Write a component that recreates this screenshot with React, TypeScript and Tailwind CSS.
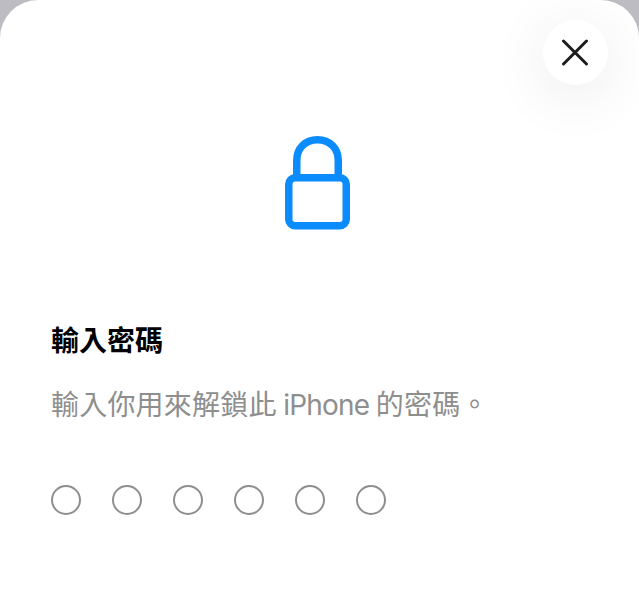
const font = { fontFamily: '"Inter", "Noto Sans CJK TC", sans-serif' };

function LockIcon() {
  return (
    <svg width="66" height="94" viewBox="0 0 66 94" fill="none">
      <path d="M11.750 42V24.500C11.750 12.500 20 3.750 32.500 3.750C45 3.750 53.250 12.500 53.250 24.500V42" stroke="#0a8cff" strokeWidth="7.500" />
      <rect x="3.750" y="41.750" width="57.500" height="48" rx="6.500" stroke="#0a8cff" strokeWidth="7.500" />
    </svg>
  );
}

export default function App() {
  return (
    <div className="h-[606px] w-[639px] overflow-hidden bg-[#bdbcc2]" style={font}>
      <div className="relative h-[640px] rounded-t-[38px] bg-white">
        <button className="absolute right-[31px] top-[20px] flex h-[65px] w-[65px] items-center justify-center rounded-full bg-white shadow-[0_10px_60px_rgba(0,0,0,0.09)]">
          <svg width="28" height="27" viewBox="0 0 28 27" fill="none" className="-translate-x-px">
            <path d="M2.500 2L25.500 25M25.500 2L2.500 25" stroke="#1c1c1e" strokeWidth="3" strokeLinecap="round" />
          </svg>
        </button>

        <div className="flex justify-center pr-[4px] pt-[136px]">
          <LockIcon />
        </div>

        <div className="px-[51px]">
          <h1 className="mt-[93px] text-[28px] font-bold leading-[36px] text-black">輸入密碼</h1>
          <p className="mt-[28px] whitespace-nowrap text-[28px] leading-[36px] tracking-[0.2px] text-[#8e8e8e] [word-spacing:-1.5px]">
            輸入你用來解鎖此 <span className="tracking-[-0.8px]">iPhone</span> 的密碼。
          </p>
          <div className="mt-[62px] flex gap-[31px]">
            {[0, 1, 2, 3, 4, 5].map((i) => (
              <div key={i} className="h-[30px] w-[30px] rounded-full border-2 border-[#8e8e8e]" />
            ))}
          </div>
        </div>
      </div>
    </div>
  );
}
